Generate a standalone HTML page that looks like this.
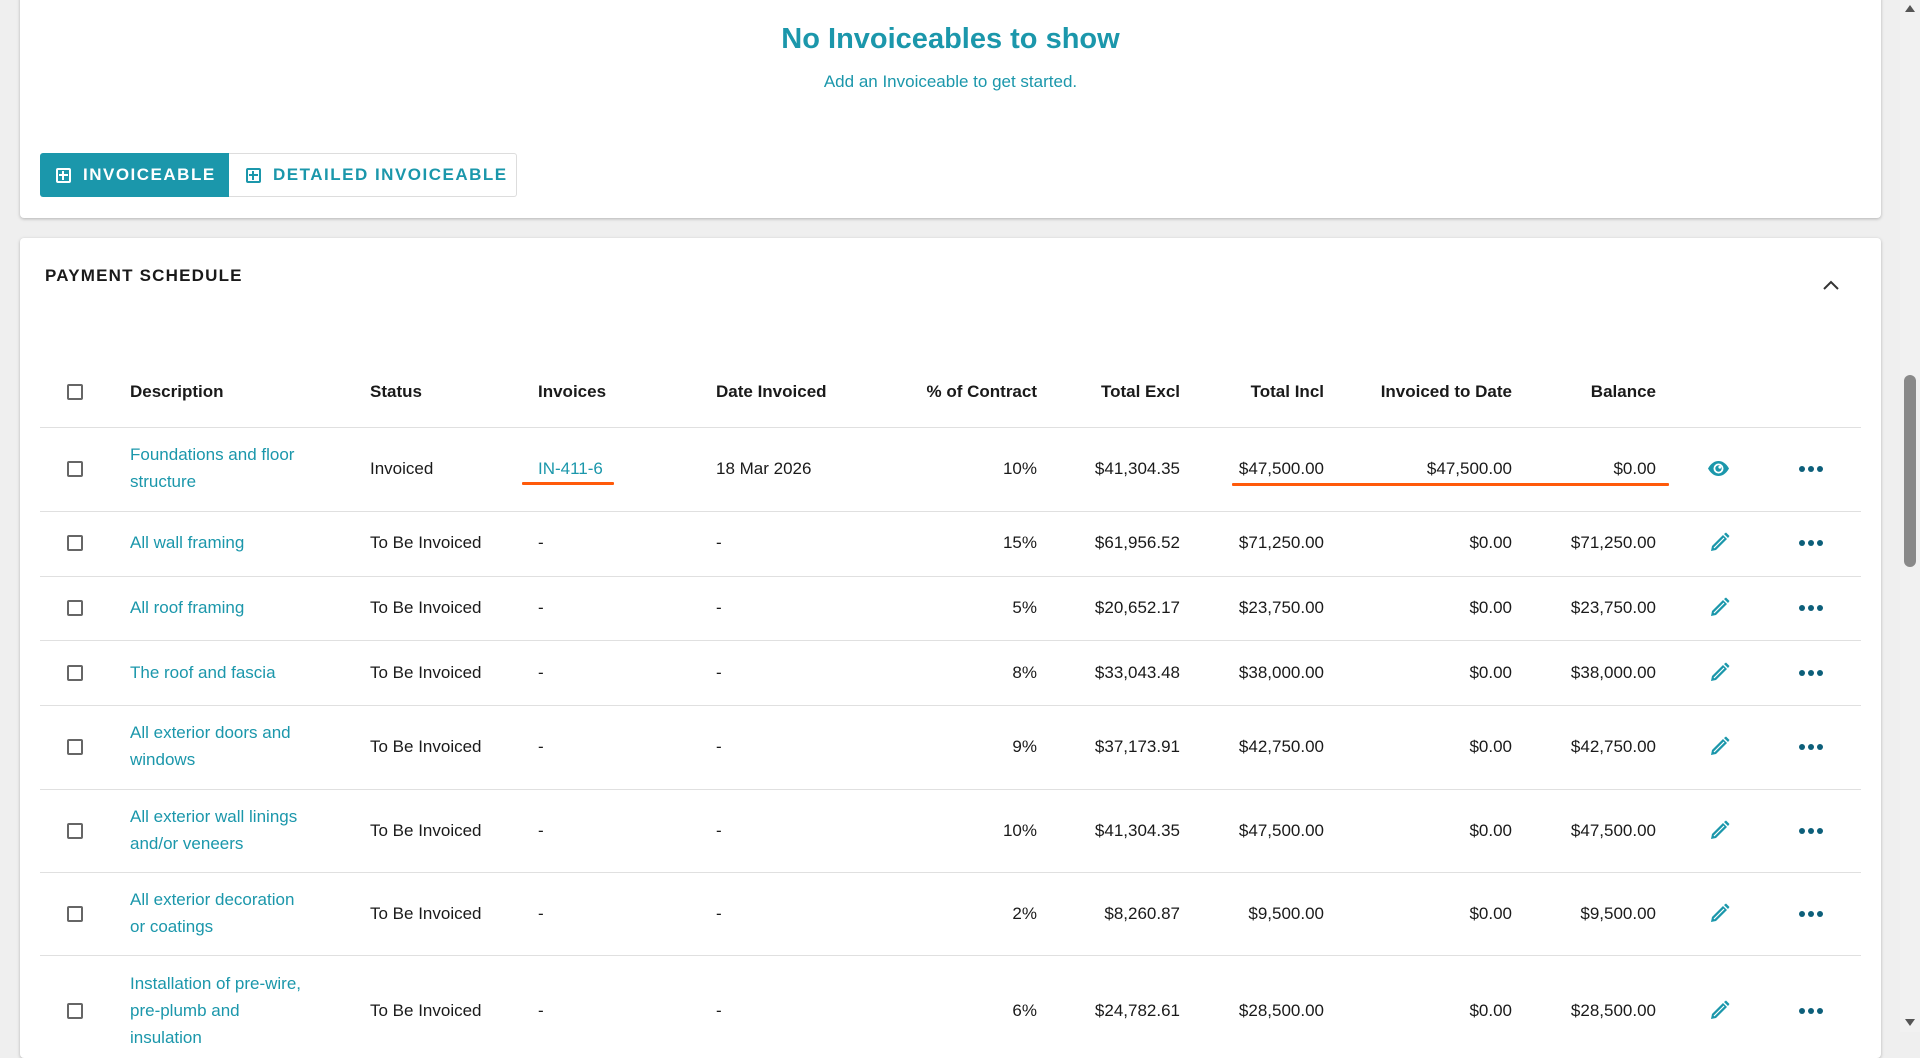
<!DOCTYPE html>
<html><head><meta charset="utf-8"><style>
*{box-sizing:border-box;margin:0;padding:0}
body{width:1920px;height:1032px;overflow:hidden;background:#efefef;font-family:"Liberation Sans",sans-serif;color:#1a1a1a;position:relative}
.card{position:absolute;left:20px;width:1861px;background:#fff;border-radius:4px;box-shadow:0 1px 3px rgba(0,0,0,.25)}
.t{color:#1b97ab}
.abs{position:absolute;white-space:nowrap}
.btn{position:absolute;top:153px;height:44px;display:flex;align-items:center;font-size:17px;font-weight:bold;letter-spacing:1.5px}
.sq{display:inline-block;width:15px;height:15px;border:2px solid currentColor;border-radius:2px;position:relative;margin-right:12px}
.sq:before{content:"";position:absolute;left:4px;top:1px;width:2px;height:9px;background:currentColor}
.sq:after{content:"";position:absolute;left:1px;top:4px;width:9px;height:2px;background:currentColor}
.cb{position:absolute;left:67px;width:16px;height:16px;border:2px solid #666;border-radius:2px}
.row{font-size:17px}
.line{position:absolute;left:40px;width:1821px;height:1px;background:#e0e0e0}
.r{text-align:right}
.dots{position:absolute;left:1799px;width:24px;display:flex;justify-content:space-between}
.dots i{width:6px;height:6px;border-radius:50%;background:#0d5f7a;display:block}
</style></head><body>
<div class="card" style="top:-5px;height:223px"></div>
<div class="abs t" style="left:0;width:1901px;text-align:center;top:23px;font-size:29px;font-weight:bold;">No Invoiceables to show</div>
<div class="abs t" style="left:0;width:1901px;text-align:center;top:72px;font-size:17px;">Add an Invoiceable to get started.</div>
<div class="btn" style="left:40px;width:189px;background:#1b97ab;color:#fff;border-radius:3px 0 0 3px;padding-left:16px"><span class="sq"></span>INVOICEABLE</div>
<div class="btn t" style="left:229px;width:288px;border:1px solid #ddd;border-left:none;border-radius:0 3px 3px 0;padding-left:17px"><span class="sq"></span>DETAILED INVOICEABLE</div>

<div class="card" style="top:238px;height:820px"></div>
<div class="abs" style="left:45px;top:266px;font-size:17px;font-weight:bold;letter-spacing:1.2px">PAYMENT SCHEDULE</div>
<svg class="abs" style="left:1821px;top:278px" width="20" height="14"><path d="M3 11 L10 4 L17 11" fill="none" stroke="#333" stroke-width="2"/></svg>

<div class="row" style="position:absolute;top:382px;left:0;width:1920px;font-weight:bold">
<div class="cb" style="top:2px"></div>
<span class="abs" style="left:130px">Description</span>
<span class="abs" style="left:370px">Status</span>
<span class="abs" style="left:538px">Invoices</span>
<span class="abs" style="left:716px">Date Invoiced</span>
<span class="abs r" style="right:883px">% of Contract</span>
<span class="abs r" style="right:740px">Total Excl</span>
<span class="abs r" style="right:596px">Total Incl</span>
<span class="abs r" style="right:408px">Invoiced to Date</span>
<span class="abs r" style="right:264px">Balance</span>
</div>
<div class="line" style="top:427px"></div>
<div class="line" style="top:511px"></div>
<div class="line" style="top:576px"></div>
<div class="line" style="top:640px"></div>
<div class="line" style="top:705px"></div>
<div class="line" style="top:789px"></div>
<div class="line" style="top:872px"></div>
<div class="line" style="top:955px"></div>

<div id="rows"></div>
<script>
var rows=[
[469,["Foundations and floor","structure"],"Invoiced","IN-411-6","18 Mar 2026","10%","$41,304.35","$47,500.00","$47,500.00","$0.00",1],
[543,["All wall framing"],"To Be Invoiced","-","-","15%","$61,956.52","$71,250.00","$0.00","$71,250.00"],
[608,["All roof framing"],"To Be Invoiced","-","-","5%","$20,652.17","$23,750.00","$0.00","$23,750.00"],
[673,["The roof and fascia"],"To Be Invoiced","-","-","8%","$33,043.48","$38,000.00","$0.00","$38,000.00"],
[747,["All exterior doors and","windows"],"To Be Invoiced","-","-","9%","$37,173.91","$42,750.00","$0.00","$42,750.00"],
[831,["All exterior wall linings","and/or veneers"],"To Be Invoiced","-","-","10%","$41,304.35","$47,500.00","$0.00","$47,500.00"],
[914,["All exterior decoration","or coatings"],"To Be Invoiced","-","-","2%","$8,260.87","$9,500.00","$0.00","$9,500.00"],
[1011,["Installation of pre-wire,","pre-plumb and","insulation"],"To Be Invoiced","-","-","6%","$24,782.61","$28,500.00","$0.00","$28,500.00"]];
var h="";
rows.forEach(function(r){
var c=r[0],t=c-10;
h+='<div class="cb" style="top:'+(c-8)+'px"></div>';
var n=r[1].length;var dt=c-13.5*n-(n==3?0:0)-1;
h+='<div class="abs t row" style="left:130px;top:'+dt+'px;line-height:27px">'+r[1].join('<br>')+'</div>';
h+='<span class="abs row" style="left:370px;top:'+t+'px">'+r[2]+'</span>';
h+='<span class="abs row'+(r[10]?' t':'')+'" style="left:538px;top:'+t+'px">'+r[3]+'</span>';
h+='<span class="abs row" style="left:716px;top:'+t+'px">'+r[4]+'</span>';
var rs=[883,740,596,408,264];
for(var i=0;i<5;i++)h+='<span class="abs row" style="right:'+rs[i]+'px;top:'+t+'px">'+r[5+i]+'</span>';
if(r[10]){
h+='<svg class="abs" style="left:1707px;top:'+(c-9)+'px" width="23" height="17" viewBox="0 0 23 17"><path d="M1 8.5C4 3 8 1 11.5 1S19 3 22 8.5C19 14 15 16 11.5 16S4 14 1 8.5Z" fill="#1b97ab"/><circle cx="11.5" cy="8.5" r="5" fill="#fff"/><circle cx="11.5" cy="8.5" r="3.2" fill="#1b97ab"/><circle cx="12.8" cy="7.2" r="1.4" fill="#fff"/></svg>';
}else{
h+='<svg class="abs" style="left:1708px;top:'+(c-11)+'px" width="22" height="22" viewBox="0 0 22 22"><path d="M3 19 L4 14 L15 3 L19 7 L8 18 Z" fill="#1b97ab"/><path d="M6 16 L16 6" stroke="#fff" stroke-width="1.2"/><path d="M16 2 L18 0.5 L21.5 4 L20 6 Z" fill="#1b97ab"/></svg>';
}
h+='<div class="dots" style="top:'+(c-3)+'px"><i></i><i></i><i></i></div>';
});
h+='<div class="abs" style="left:522px;top:482px;width:92px;height:3px;background:#ff5a0a;border-radius:1px"></div>';
h+='<div class="abs" style="left:1232px;top:483px;width:437px;height:3px;background:#ff5a0a;border-radius:1px"></div>';
document.getElementById('rows').innerHTML=h;
</script>
<div class="abs" style="left:1900px;top:0;width:20px;height:1032px;background:#f1f1f1"></div>
<div class="abs" style="left:1904px;top:375px;width:12px;height:192px;background:#8a8a8a;border-radius:6px"></div>
<svg class="abs" style="left:1904px;top:3px" width="12" height="10"><path d="M1 9 L6 2 L11 9Z" fill="#555"/></svg>
<svg class="abs" style="left:1904px;top:1018px" width="12" height="10"><path d="M1 1 L6 8 L11 1Z" fill="#555"/></svg>
</body></html>
